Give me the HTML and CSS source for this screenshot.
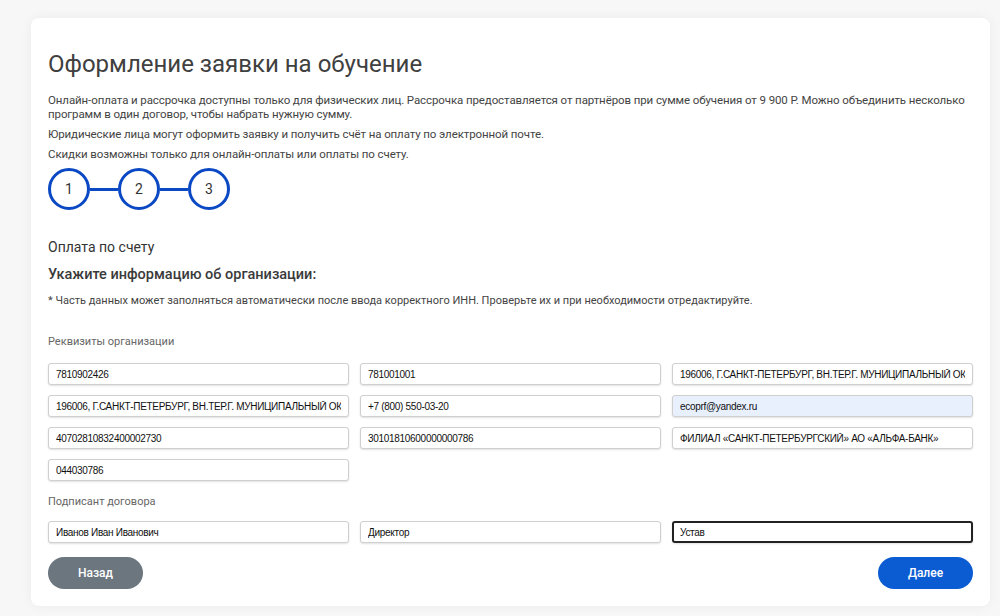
FILE: index.html
```html
<!DOCTYPE html>
<html lang="ru">
<head>
    <meta charset="UTF-8">
    <meta name="viewport" content="width=device-width, initial-scale=1.0">
    <title>Оформление заявки на обучение</title>
    <link rel="stylesheet" href="styles.css">
</head>
<body>
    <div class="order-card">
        <h1>Оформление заявки на обучение</h1>
        <p class="info">Онлайн-оплата и рассрочка доступны только для физических лиц. Рассрочка предоставляется от партнёров при сумме обучения от 9 900 Р. Можно объединить несколько программ в один договор, чтобы набрать нужную сумму.</p>
        <p class="info">Юридические лица могут оформить заявку и получить счёт на оплату по электронной почте.</p>
        <p class="info">Скидки возможны только для онлайн-оплаты или оплаты по счету.</p>

        <div class="steps">
            <span class="step">1</span>
            <span class="step-line"></span>
            <span class="step">2</span>
            <span class="step-line"></span>
            <span class="step">3</span>
        </div>

        <h2 class="pay-type">Оплата по счету</h2>
        <h3 class="org-title">Укажите информацию об организации:</h3>
        <p class="note">* Часть данных может заполняться автоматически после ввода корректного ИНН. Проверьте их и при необходимости отредактируйте.</p>

        <form id="org-form">
            <div class="group-label">Реквизиты организации</div>
            <div class="fields">
                <input type="text" value="7810902426">
                <input type="text" value="781001001">
                <input type="text" value="196006, Г.САНКТ-ПЕТЕРБУРГ, ВН.ТЕР.Г. МУНИЦИПАЛЬНЫЙ ОКРУГ">
                <input type="text" value="196006, Г.САНКТ-ПЕТЕРБУРГ, ВН.ТЕР.Г. МУНИЦИПАЛЬНЫЙ ОКРУГ">
                <input type="text" value="+7 (800) 550-03-20">
                <input type="email" class="autofilled" value="ecoprf@yandex.ru">
                <input type="text" value="40702810832400002730">
                <input type="text" value="30101810600000000786">
                <input type="text" value="ФИЛИАЛ «САНКТ-ПЕТЕРБУРГСКИЙ» АО «АЛЬФА-БАНК»">
                <input type="text" value="044030786">
            </div>

            <div class="group-label signer">Подписант договора</div>
            <div class="fields">
                <input type="text" value="Иванов Иван Иванович">
                <input type="text" value="Директор">
                <input type="text" class="focused" value="Устав">
            </div>

            <div class="actions">
                <button type="button" class="btn btn-back">Назад</button>
                <button type="button" class="btn btn-next">Далее</button>
            </div>
        </form>
    </div>
</body>
</html>
```

FILE: styles.css
```css
body {
    font-family: Roboto, 'Noto Sans', sans-serif;
    background-color: #f7f7f7;
    margin: 0;
    padding: 18px 10px 10px 31px;
    color: #444444;
}

.order-card {
    width: 925px;
    background-color: #ffffff;
    border-radius: 8px;
    box-shadow: 0 0 12px rgba(0, 0, 0, 0.05);
    padding: 30px 17px 17px;
}

h1 {
    font-size: 24px;
    font-weight: 400;
    line-height: 32px;
    margin: 0 0 13px;
    color: #404040;
}

.info {
    font-size: 11.5px;
    letter-spacing: -0.1px;
    line-height: 14px;
    margin: 0 0 6px;
}

.steps {
    display: flex;
    align-items: center;
    margin: 7px 0 27px;
}

.step {
    width: 36px;
    height: 36px;
    border: 3px solid #0a48c4;
    border-radius: 50%;
    display: flex;
    align-items: center;
    justify-content: center;
    font-size: 14px;
    color: #333333;
}

.step-line {
    width: 28px;
    height: 3px;
    background-color: #0a48c4;
}

.pay-type {
    font-size: 14px;
    font-weight: 400;
    line-height: 20px;
    margin: 0 0 8px;
    color: #333333;
}

.org-title {
    font-size: 14.5px;
    font-weight: 500;
    line-height: 20px;
    margin: 0 0 9px;
    color: #3a3a3a;
}

.note {
    font-size: 11px;
    line-height: 14px;
    margin: 0 0 27px;
    color: #444444;
}

.group-label {
    font-size: 11px;
    color: #666666;
    line-height: 14px;
    margin-bottom: 14px;
}

.group-label.signer {
    margin-top: 14px;
    margin-bottom: 12px;
}

.fields {
    display: grid;
    grid-template-columns: repeat(3, 1fr);
    column-gap: 11px;
    row-gap: 10px;
}

.fields input {
    font-family: 'Liberation Sans', Arial, sans-serif;
    font-size: 10px;
    letter-spacing: -0.3px;
    color: #111111;
    height: 22px;
    padding: 0 7px;
    border: 1px solid #cfcfcf;
    border-radius: 3px;
    box-shadow: 0 1px 2px rgba(0, 0, 0, 0.12);
    background-color: #ffffff;
    box-sizing: border-box;
    width: 100%;
    outline: none;
}

.fields input.autofilled {
    background-color: #e8f0fe;
}

.fields input.focused {
    border: 2px solid #222222;
    padding: 0 6px;
}

.actions {
    display: flex;
    justify-content: space-between;
    margin-top: 14px;
}

.btn {
    width: 95px;
    height: 32px;
    border: none;
    border-radius: 16px;
    color: #ffffff;
    font-family: Roboto, 'Noto Sans', sans-serif;
    font-size: 12px;
    font-weight: 500;
    cursor: pointer;
}

.btn-back {
    background-color: #6b767f;
}

.btn-next {
    background-color: #0b5bd3;
}
```
